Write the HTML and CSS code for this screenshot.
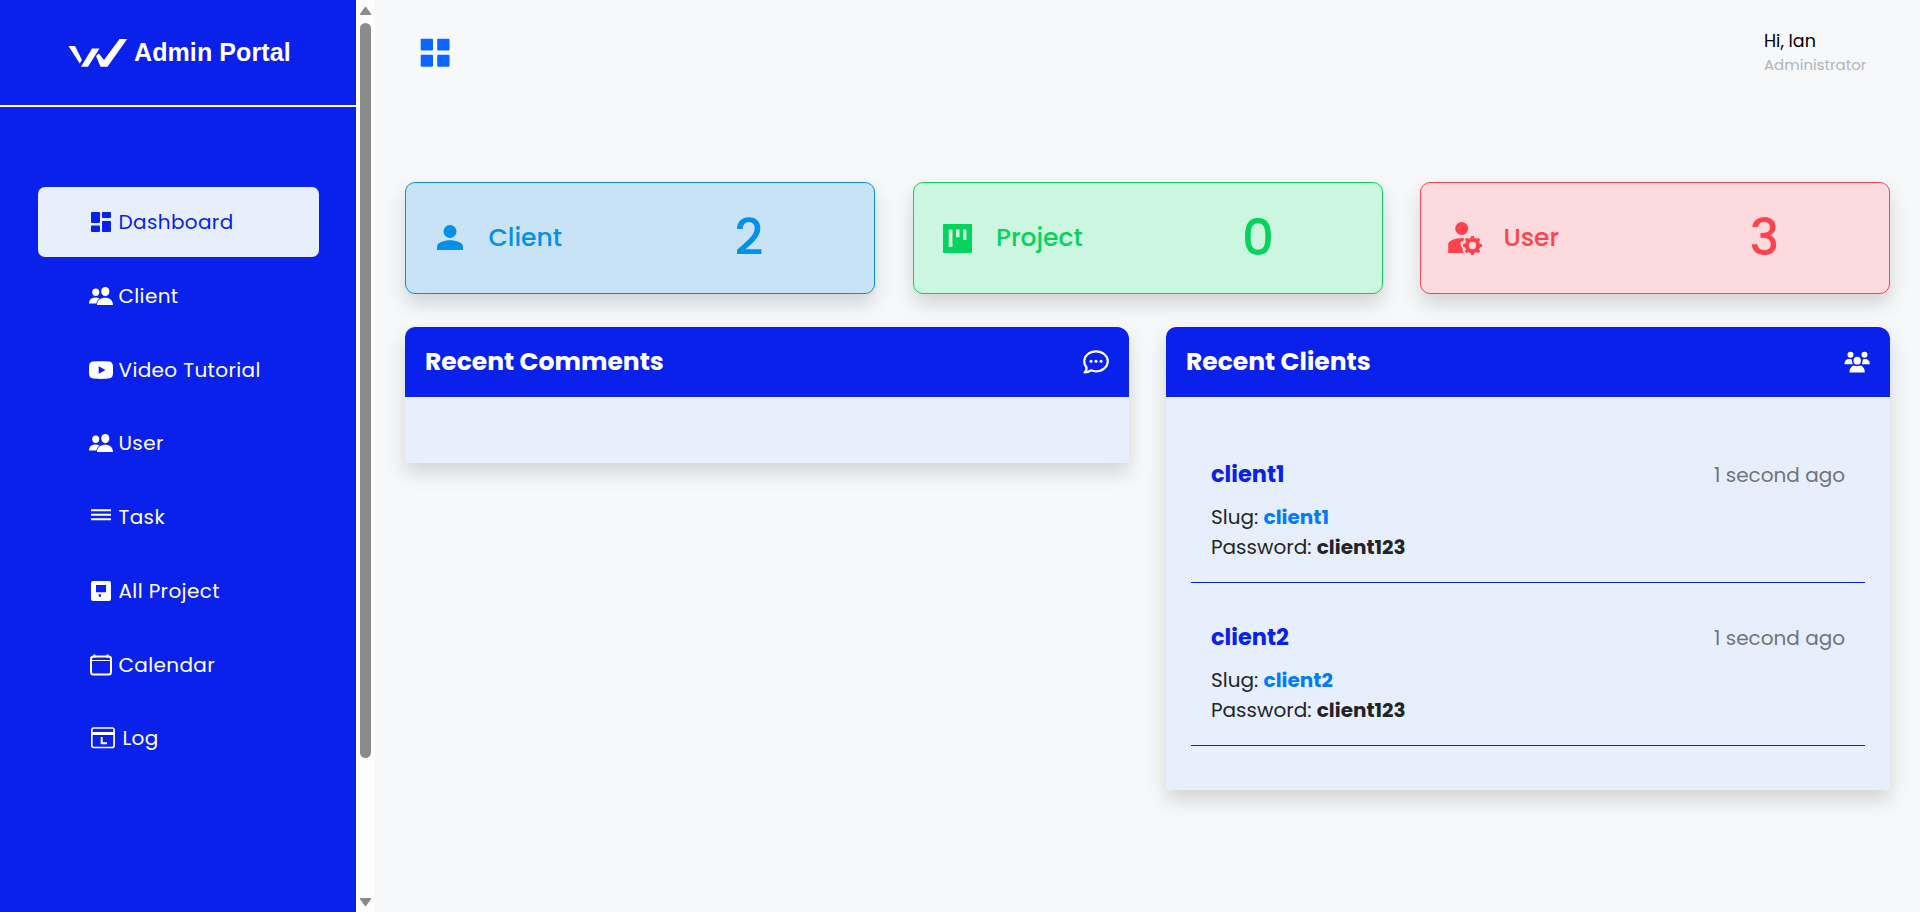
FILE: index.html
```html
<!DOCTYPE html>
<html lang="en">
<head>
<meta charset="utf-8">
<title>Admin Portal</title>
<link rel="stylesheet" href="styles.css">
</head>
<body>
<div class="app">
  <aside class="sidebar">
    <div class="brand">
      <svg class="logo" width="60" height="30" viewBox="0 0 60 30" fill="#fff"><path d="M.5 8H7l7 14-2.300 3.500zM13 28.700l11-18.200H31.500L20 28.700zM28 18l2.800-2.500 5.200 6.500L51.500 1h7.700L39.500 28.700h-7z"/></svg>
      <span class="brand-name">Admin Portal</span>
    </div>
    <nav class="menu">
      <a class="item active"><svg class="ico" viewBox="0 0 24 24"><path d="M3 2h7a1 1 0 0 1 1 1v9a1 1 0 0 1-1 1H3a1 1 0 0 1-1-1V3a1 1 0 0 1 1-1zM14 2h7a1 1 0 0 1 1 1v4a1 1 0 0 1-1 1h-7a1 1 0 0 1-1-1V3a1 1 0 0 1 1-1zM14 11h7a1 1 0 0 1 1 1V21a1 1 0 0 1-1 1h-7a1 1 0 0 1-1-1v-9a1 1 0 0 1 1-1zM3 15.500h7a1 1 0 0 1 1 1V21a1 1 0 0 1-1 1H3a1 1 0 0 1-1-1v-4.500a1 1 0 0 1 1-1z"/></svg><span>Dashboard</span></a>
      <a class="item"><svg class="ico" viewBox="0 0 24 24"><ellipse cx="6.700" cy="8.300" rx="3.500" ry="3.700"/><ellipse cx="16.300" cy="7.600" rx="4.100" ry="4.600"/><path d="M0 19.500c0-4 3-6 6.500-6 1.500 0 3 .3 4.200 1-2 1.300-3.100 3-3.200 5zM8 21c0-5 4-7.300 8.200-7.300S24 16 24 21z"/></svg><span>Client</span></a>
      <a class="item"><svg class="ico" viewBox="0 0 24 24"><path fill-rule="evenodd" d="M4.500 3.500C10 3 14 3 19.500 3.500c3 .2 4.200 1.500 4.400 4.200.2 3 .2 5.600 0 8.600-.2 2.700-1.400 4-4.400 4.200-5.500.5-9.500.5-15 0-3-.2-4.200-1.500-4.400-4.200-.2-3-.2-5.600 0-8.600.2-2.700 1.400-4 4.400-4.200zM9.700 8.200v7.600l6.800-3.800z"/></svg><span>Video Tutorial</span></a>
      <a class="item"><svg class="ico" viewBox="0 0 24 24"><ellipse cx="6.700" cy="8.300" rx="3.500" ry="3.700"/><ellipse cx="16.300" cy="7.600" rx="4.100" ry="4.600"/><path d="M0 19.500c0-4 3-6 6.500-6 1.500 0 3 .3 4.200 1-2 1.300-3.100 3-3.200 5zM8 21c0-5 4-7.300 8.200-7.300S24 16 24 21z"/></svg><span>User</span></a>
      <a class="item"><svg class="ico" viewBox="0 0 24 24"><path d="M2 4.300h20v2H2zM2 8.700h20v2H2zM2 13.200h20v2H2z"/></svg><span>Task</span></a>
      <a class="item"><svg class="ico" viewBox="0 0 24 24"><path fill-rule="evenodd" d="M4 2h16a2 2 0 0 1 2 2v16a2 2 0 0 1-2 2H4a2 2 0 0 1-2-2V4a2 2 0 0 1 2-2zM7 6v7.200h10V6zM9.700 15.300v2.500H12v-2.500z"/></svg><span>All Project</span></a>
      <a class="item"><svg class="ico" viewBox="0 0 24 24"><g fill="none" stroke="currentColor"><rect x="2" y="3.500" width="20" height="18" rx="2.500" stroke-width="2"/><path d="M2 7.500h20" stroke-width="1"/><path d="M5.500 1.500v3M18.500 1.500v3" stroke-width="2"/></g></svg><span>Calendar</span></a>
      <a class="item log"><svg class="ico" viewBox="0 0 24 24"><g fill="none" stroke="currentColor"><rect x=".8" y="2" width="22.300" height="19.500" rx="2" stroke-width="1.700"/><path d="M1 7.500h22" stroke-width="3"/><path d="M10.700 11v6.300h5.300" stroke-width="2"/></g></svg><span>Log</span></a>
    </nav>
  </aside>
  <div class="scroll">
    <svg width="13" height="10" viewBox="0 0 13 10"><path d="M6.500 1.500 11.300 8.300H1.700z"/></svg>
    <div class="thumb"></div>
    <svg class="down" width="13" height="10" viewBox="0 0 13 10"><path d="M6.500 8.500 1.700 1.700h9.600z"/></svg>
  </div>
  <main class="main">
    <header class="topbar">
      <svg class="grid-ico" width="30" height="30" viewBox="0 0 30 30"><rect x=".7" y=".7" width="12.300" height="11.800" rx="1"/><rect x="17.200" y=".7" width="12.300" height="11.800" rx="1"/><rect x=".7" y="16.700" width="12.300" height="12" rx="1"/><rect x="17.200" y="16.700" width="12.300" height="12" rx="1"/></svg>
      <div class="who"><div class="hi">Hi, Ian</div><div class="role">Administrator</div></div>
    </header>
    <section class="stats">
      <div class="stat blue">
        <svg class="sico" viewBox="0 0 40 40"><circle cx="19" cy="13.500" r="6.500"/><path d="M6 32v-3c0-4.500 7-6.700 13-6.700S32 24.500 32 29v3z"/></svg>
        <span class="name">Client</span><span class="num">2</span>
      </div>
      <div class="stat green">
        <svg class="sico" viewBox="0 0 40 40"><path fill-rule="evenodd" d="M5 6h27a1 1 0 0 1 1 1v27a1 1 0 0 1-1 1H5a1 1 0 0 1-1-1V7a1 1 0 0 1 1-1zM9.700 11.500V29h3.800V11.500zM17 11.500v7.700h3.500v-7.700zM24 11.500V22h3.500V11.500z"/></svg>
        <span class="name">Project</span><span class="num">0</span>
      </div>
      <div class="stat red">
        <svg class="sico" viewBox="0 0 40 40"><g transform="translate(.7 1)"><circle cx="15" cy="9.500" r="6.500"/><path d="M1.500 34V25c0-3 7-6.500 16-6l-1 3-2.500 1v4l2 2v3l1 2z"/><g transform="translate(25.800 26.500)"><circle r="5.700" fill="none" stroke="currentColor" stroke-width="4"/><path id="tooth" d="M-2-6.800-1.300-9.500h2.600L2-6.800zM-2 6.800-1.300 9.500h2.600L2 6.800zM-6.800-2-9.500-1.300v2.600L-6.800 2zM6.800-2l2.700.7v2.600L6.800 2z"/><use href="#tooth" transform="rotate(45)"/></g></g></svg>
        <span class="name">User</span><span class="num">3</span>
      </div>
    </section>
    <section class="panels">
      <div class="panel">
        <div class="head"><h2>Recent Comments</h2><svg class="hico" viewBox="0 0 26 24"><path d="M1.500 22.500c1.500-1.300 2.300-3 2-5C2 15.700 1.200 13.700 1.200 11.300 1.200 5.800 6.500 1.300 13 1.300S24.800 5.800 24.800 11.300 19.500 21.300 13 21.300c-1.800 0-3.500-.3-5-1-1.800 1.300-4 2-6.500 2.200z" fill="none" stroke="currentColor" stroke-width="2.200" stroke-linejoin="round"/><circle cx="8" cy="11.300" r="1.500"/><circle cx="13" cy="11.300" r="1.500"/><circle cx="18" cy="11.300" r="1.500"/></svg></div>
        <div class="body empty"></div>
      </div>
      <div class="panel">
        <div class="head"><h2>Recent Clients</h2><svg class="hico" viewBox="0 0 26 24"><circle cx="6.500" cy="4.800" r="3"/><circle cx="20.500" cy="4.800" r="3"/><ellipse cx="13.200" cy="10.700" rx="3.700" ry="3.900"/><path d="M.5 14.300c0-3.800 2-5.300 4.700-5.300 1.200 0 2 .2 2.700.6-.2 1.800.2 3.400 1 4.700zM25.800 14.300c0-3.800-2-5.300-4.700-5.300-1 0-1.800.2-2.500.6.2 1.800-.2 3.400-1 4.700zM5.500 22.500c0-4.500 2.300-6.500 4.700-6.900 1.900.9 4 .9 5.900 0 2.400.4 4.700 2.400 4.700 6.900z"/></svg></div>
        <div class="body">
          <article class="client">
            <div class="row"><strong class="cname">client1</strong><span class="ago">1 second ago</span></div>
            <div class="line">Slug: <b class="link">client1</b></div>
            <div class="line">Password: <b>client123</b></div>
          </article>
          <article class="client">
            <div class="row"><strong class="cname">client2</strong><span class="ago">1 second ago</span></div>
            <div class="line">Slug: <b class="link">client2</b></div>
            <div class="line">Password: <b>client123</b></div>
          </article>
        </div>
      </div>
    </section>
  </main>
</div>
</body>
</html>
```
FILE: styles.css
```css
* { box-sizing: border-box; }
body { margin: 0; font-family: Poppins, Inter, "Open Sans", sans-serif; background: #f7f8fa; color: #212529; overflow: hidden; }
svg { fill: currentColor; flex: none; display: block; }
.app { display: flex; height: 912px; }

.sidebar { width: 356px; background: #0a20eb; color: #fff; }
.brand { height: 107px; border-bottom: 2px solid #fff; display: flex; align-items: center; padding-left: 68px; }
.logo { margin-right: 6px; }
.brand-name { font: bold 25px/30px "Liberation Sans", Arial, sans-serif; letter-spacing: .1px; white-space: nowrap; padding-bottom: 2px; }
.menu { padding: 80px 37px 0 38px; display: flex; flex-direction: column; gap: 3.77px; }
.item { height: 70px; display: flex; align-items: center; gap: 5.5px; padding-left: 51px; border-radius: 7px; font-size: 20px; letter-spacing: .375px; line-height: 30px; white-space: nowrap; }
.item.active { background: #e7effd; color: #0a20eb; }
.item.log { padding-left: 53px; gap: 7.5px; }
.ico { width: 24px; height: 24px; }

.scroll { width: 19px; background: #fdfdfd; display: flex; flex-direction: column; align-items: center; padding: 6px 1px 5px 0; color: #8b8b8b; }
.scroll path { stroke: #8b8b8b; stroke-width: 1.5; stroke-linejoin: round; }
.thumb { width: 11px; height: 735px; border-radius: 6px; background: #8b8b8b; margin-top: 7px; }
.down { margin-top: auto; }

.main { flex: 1; padding: 0 30px; }
.topbar { height: 182px; display: flex; justify-content: space-between; padding: 27px 23px 0 15px; }
.grid-ico { color: #0a66ff; margin-top: 11px; }
.who { width: 103px; white-space: nowrap; }
.hi { font-size: 17.5px; line-height: 28px; color: #000; }
.role { font-size: 15px; line-height: 20px; color: #b2b4b8; }

.stats { display: grid; grid-template-columns: repeat(3, 1fr); gap: 37.5px; }
.stat { height: 112px; border: 1px solid currentColor; border-radius: 10px; display: flex; align-items: center; padding: 0 0 0 25px; box-shadow: 0 10px 20px rgba(0,0,0,.15); }
.sico { width: 40px; height: 40px; margin-right: 17.5px; }
.blue { background: #c8e3f6; color: #0290e9; }
.green { background: #cbf6df; color: #04d45d; }
.red { background: #fddadd; color: #fd444c; }
.name { font-size: 25px; font-weight: 500; line-height: 38px; width: 246px; }
.num { font-size: 50px; font-weight: 500; line-height: 60px; margin-top: -1px; }

.panels { margin-top: 33px; display: grid; grid-template-columns: 1fr 1fr; gap: 37px; align-items: start; }
.panel { box-shadow: 0 10px 20px rgba(0,0,0,.15); border-radius: 10px 10px 0 0; }
.head { height: 70px; background: #0a20eb; color: #fff; border-radius: 10px 12px 0 0; padding: 0 20px; display: flex; align-items: center; justify-content: space-between; }
.head h2 { margin: 0; font-size: 25px; line-height: 30px; font-weight: 700; white-space: nowrap; }
.hico { width: 26px; height: 24px; }
.body { background: #e7effd; padding: 23px 25px 44px; }
.body.empty { height: 66px; padding: 0; }
.client { height: 163px; padding: 39px 20px 0; border-bottom: 1px solid #0a20eb; }
.row { display: flex; justify-content: space-between; align-items: baseline; height: 30px; line-height: 30px; margin-bottom: 13px; }
.cname { font-size: 22.5px; color: #0a20eb; }
.ago { font-size: 20px; color: #6c757d; }
.line { font-size: 20px; line-height: 30px; }
.link { color: #007bff; }
```
